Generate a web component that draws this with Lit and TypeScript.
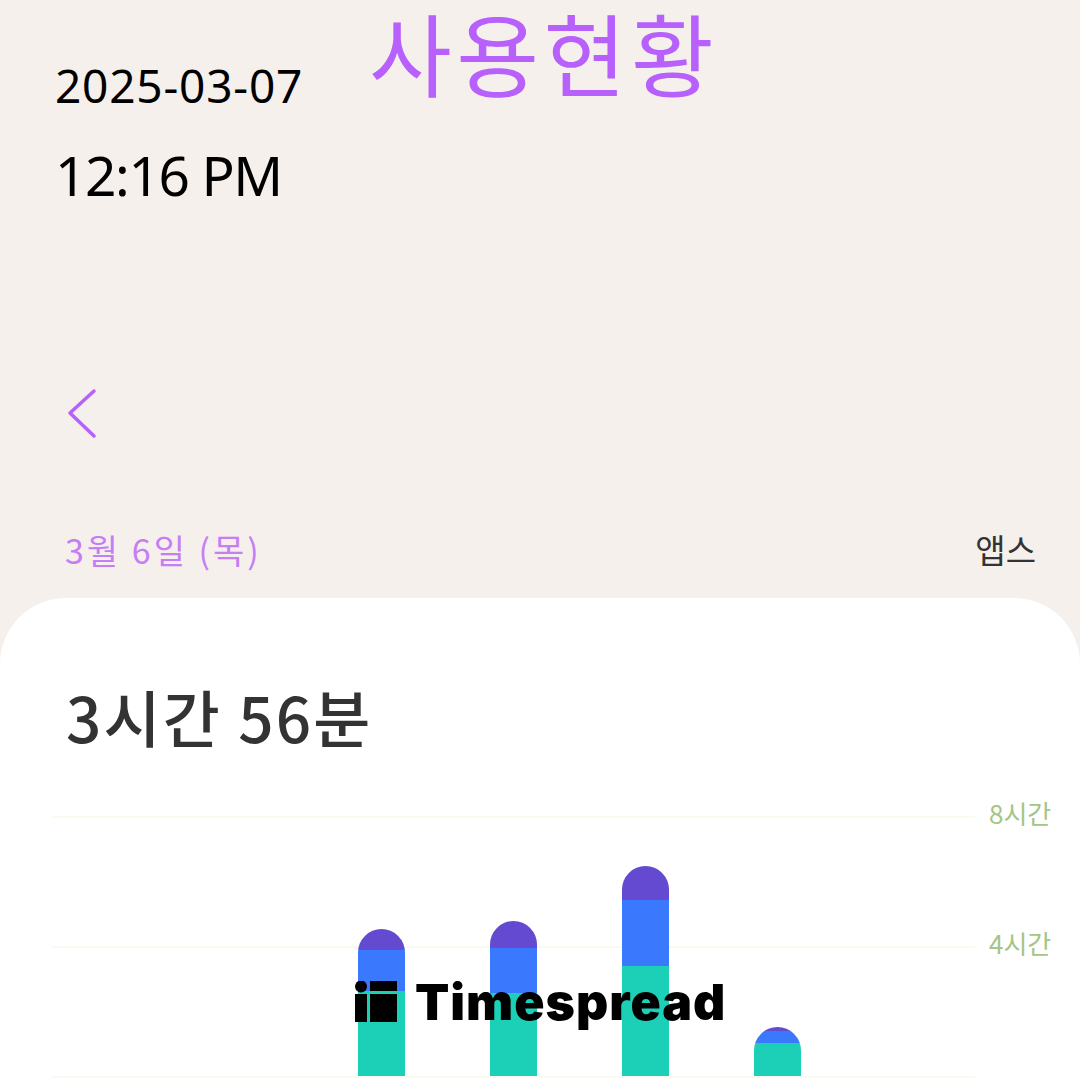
import { LitElement, css, html, unsafeCSS } from "lit";
import { customElement } from "lit/decorators.js";

const KR = unsafeCSS(`"Noto Sans CJK KR", "Noto Sans", sans-serif`);

// px heights of each stacked bar, top to bottom: purple, blue, teal
const BARS = [
  null,
  null,
  [21, 41, 85],
  [27, 45, 83],
  [34, 66, 110],
  [4, 12, 33],
  null,
];

@customElement("app-root")
export class AppRoot extends LitElement {
  static styles = css`
    :host {
      display: flex;
      flex-direction: column;
      position: relative;
      width: 1080px;
      height: 1080px;
      overflow: hidden;
      background: #f5f0ec;
      font-family: "Noto Sans", "Noto Sans CJK KR", sans-serif;
    }
    .top {
      display: flex;
      height: 208px;
      flex: none;
    }
    .clock {
      display: flex;
      flex-direction: column;
      padding: 55px 0 0 55px;
      width: 369px;
      box-sizing: border-box;
      color: #000;
    }
    .date {
      font-size: 46px;
      line-height: 60px;
      letter-spacing: 0.8px;
    }
    .time {
      font-size: 55px;
      line-height: 76px;
      margin-top: 22px;
      letter-spacing: -1.4px;
    }
    .title {
      font-family: ${KR};
      font-size: 90px;
      line-height: 102px;
      color: #b760fb;
      letter-spacing: 4.5px;
    }
    .back {
      display: block;
      margin: 180px 0 0 66px;
      flex: none;
    }
    .range {
      display: flex;
      justify-content: space-between;
      align-items: center;
      flex: none;
      height: 50px;
      margin-top: 84px;
      padding: 0 44px 0 65px;
      font-family: ${KR};
    }
    .day {
      font-size: 34px;
      letter-spacing: 3px;
      color: #c57ef5;
    }
    .apps {
      font-size: 33px;
      color: #333;
    }
    .card {
      flex: 1;
      margin-top: 24px;
      background: #fff;
      border-radius: 66px 66px 0 0;
      padding: 78px 0 0 52px;
      font-family: ${KR};
    }
    .total {
      font-size: 62px;
      line-height: 80px;
      font-weight: 500;
      letter-spacing: 2.2px;
      color: #333;
      padding-left: 14px;
    }
    .chart {
      display: grid;
      grid-template-columns: 923px auto;
      column-gap: 14px;
      margin-top: 60px;
    }
    .plot {
      position: relative;
      height: 258px;
      display: grid;
      grid-template-columns: repeat(7, 1fr);
      align-items: end;
      justify-items: center;
      border-top: 2px solid #fafaf0;
      border-bottom: 2px solid #fafaf0;
    }
    .mid {
      position: absolute;
      left: 0;
      right: 0;
      top: 128px;
      height: 2px;
      background: #fafaf0;
    }
    .bar {
      position: relative;
      width: 47px;
      display: flex;
      flex-direction: column;
      border-radius: 24px 24px 0 0;
      overflow: hidden;
    }
    .purple { background: #634ad0; }
    .blue { background: #3a78fd; }
    .teal { background: #1bd0b6; }
    .ticks {
      display: flex;
      flex-direction: column;
      gap: 96px;
      margin-top: -20px;
      font-size: 26px;
      line-height: 34px;
      color: #a5c585;
    }
    .logo {
      position: absolute;
      left: 355px;
      top: 972px;
      display: flex;
      align-items: center;
      gap: 18px;
      color: #000;
      font-family: Inter, sans-serif;
      font-weight: 900;
      font-size: 50px;
      line-height: 60px;
      letter-spacing: 1px;
    }
  `;

  render() {
    return html`
      <div class="top">
        <div class="clock">
          <div class="date">2025-03-07</div>
          <div class="time">12:16 PM</div>
        </div>
        <div class="title">사용현황</div>
      </div>
      <svg class="back" width="32" height="52" viewBox="0 0 32 52" fill="none">
        <path d="M28 3 L4 25 L28 48" stroke="#b760fb" stroke-width="3.5" stroke-linecap="round" stroke-linejoin="round" />
      </svg>
      <div class="range">
        <span class="day">3월 6일 (목)</span>
        <span class="apps">앱스</span>
      </div>
      <div class="card">
        <div class="total">3시간 56분</div>
        <div class="chart">
          <div class="plot">
            <div class="mid"></div>
            ${BARS.map((b) =>
              b
                ? html`<div class="bar">
                    <div class="purple" style="height:${b[0]}px"></div>
                    <div class="blue" style="height:${b[1]}px"></div>
                    <div class="teal" style="height:${b[2]}px"></div>
                  </div>`
                : html`<div></div>`
            )}
          </div>
          <div class="ticks">
            <span>8시간</span>
            <span>4시간</span>
          </div>
        </div>
      </div>
      <div class="logo">
        <svg width="42" height="42" viewBox="0 0 42 42" fill="#000">
          <circle cx="6" cy="5.5" r="6" />
          <rect x="15" y="0" width="27" height="10" />
          <rect x="0" y="13" width="12" height="28" />
          <rect x="15" y="13" width="27" height="28" />
        </svg>
        <span>Timespread</span>
      </div>
    `;
  }
}
